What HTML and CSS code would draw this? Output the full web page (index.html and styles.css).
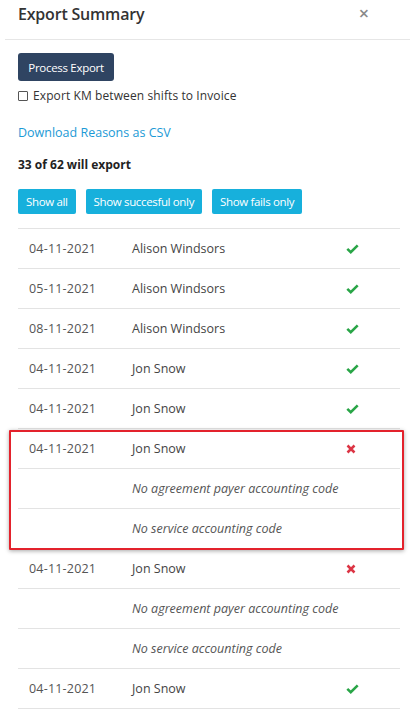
FILE: index.html
```html
<!DOCTYPE html>
<html>
<head>
<meta charset="utf-8">
<link rel="stylesheet" href="styles.css">
</head>
<body>
<div class="modal">
  <div class="header">
    <h1 class="title">Export Summary</h1>
    <span class="close">&times;</span>
  </div>
  <div class="content">
    <button class="btn-primary">Process Export</button>
    <label class="check-row"><input type="checkbox" class="check"> Export KM between shifts to Invoice</label>
    <a class="link">Download Reasons as CSV</a>
    <div class="count">33 of 62 will export</div>
    <div class="filters">
      <button class="btn-info">Show all</button>
      <button class="btn-info">Show succesful only</button>
      <button class="btn-info">Show fails only</button>
    </div>
    <div class="table">
      <div class="row"><span class="date">04-11-2021</span><span class="name">Alison Windsors</span><span class="status"><svg class="ok" viewBox="0 0 12 9"><path d="M1.2 4.4 L4.4 7.4 L10.8 1.2" /></svg></span></div>
      <div class="row"><span class="date">05-11-2021</span><span class="name">Alison Windsors</span><span class="status"><svg class="ok" viewBox="0 0 12 9"><path d="M1.2 4.4 L4.4 7.4 L10.8 1.2" /></svg></span></div>
      <div class="row"><span class="date">08-11-2021</span><span class="name">Alison Windsors</span><span class="status"><svg class="ok" viewBox="0 0 12 9"><path d="M1.2 4.4 L4.4 7.4 L10.8 1.2" /></svg></span></div>
      <div class="row"><span class="date">04-11-2021</span><span class="name">Jon Snow</span><span class="status"><svg class="ok" viewBox="0 0 12 9"><path d="M1.2 4.4 L4.4 7.4 L10.8 1.2" /></svg></span></div>
      <div class="row"><span class="date">04-11-2021</span><span class="name">Jon Snow</span><span class="status"><svg class="ok" viewBox="0 0 12 9"><path d="M1.2 4.4 L4.4 7.4 L10.8 1.2" /></svg></span></div>
      <div class="group highlighted">
        <div class="row"><span class="date">04-11-2021</span><span class="name">Jon Snow</span><span class="status"><svg class="fail" viewBox="0 0 10 10"><path d="M1.5 1.5 L8.5 8.5 M8.5 1.5 L1.5 8.5" /></svg></span></div>
        <div class="row"><span class="date"></span><span class="reason">No agreement payer accounting code</span></div>
        <div class="row"><span class="date"></span><span class="reason">No service accounting code</span></div>
        <div class="highlight-box"></div>
      </div>
      <div class="group">
        <div class="row"><span class="date">04-11-2021</span><span class="name">Jon Snow</span><span class="status"><svg class="fail" viewBox="0 0 10 10"><path d="M1.5 1.5 L8.5 8.5 M8.5 1.5 L1.5 8.5" /></svg></span></div>
        <div class="row"><span class="date"></span><span class="reason">No agreement payer accounting code</span></div>
        <div class="row"><span class="date"></span><span class="reason">No service accounting code</span></div>
      </div>
      <div class="row"><span class="date">04-11-2021</span><span class="name">Jon Snow</span><span class="status"><svg class="ok" viewBox="0 0 12 9"><path d="M1.2 4.4 L4.4 7.4 L10.8 1.2" /></svg></span></div>
    </div>
  </div>
</div>
</body>
</html>
```
FILE: styles.css
```css
* { box-sizing: border-box; }
html, body { margin: 0; padding: 0; background: #fff; }
body {
  font-family: "Open Sans", "Noto Sans", sans-serif;
  color: #333;
  font-size: 12px;
  overflow: hidden;
}
.modal { width: 415px; }
.header {
  margin: 0 5px;
  height: 40px;
  padding: 0 41px 0 13px;
  border-bottom: 1px solid #e6e6e6;
  display: flex;
  justify-content: space-between;
  align-items: flex-start;
}
.title {
  margin: 0;
  font-size: 16px;
  font-weight: 600;
  line-height: 28px;
  color: #333;
  letter-spacing: -0.2px;
}
.close {
  font-size: 18px;
  line-height: 26px;
  color: #8a8a8a;
  font-weight: 600;
}
.content {
  padding: 13px 15px 0 18px;
  display: flex;
  flex-direction: column;
  align-items: flex-start;
}
.btn-primary {
  height: 28px;
  width: 96px;
  padding: 0;
  border: none;
  border-radius: 3px;
  background: #2f4462;
  color: #fff;
  font-family: inherit;
  font-size: 11.5px;
  letter-spacing: -0.3px;
}
.check-row {
  display: flex;
  align-items: center;
  margin-top: 7px;
  font-size: 12px;
  color: #333;
  line-height: 16px;
  gap: 5px;
  letter-spacing: 0.1px;
}
.check {
  appearance: none;
  -webkit-appearance: none;
  margin: 0;
  width: 10px;
  height: 10px;
  border: 1px solid #555;
  border-radius: 1px;
  background: #fff;
}
.link {
  margin-top: 21px;
  color: #1c9ad6;
  font-size: 12.5px;
  line-height: 16px;
}
.count {
  margin-top: 16px;
  font-weight: 700;
  font-size: 12px;
  line-height: 16px;
  color: #222;
}
.filters {
  margin-top: 16px;
  display: flex;
  gap: 10px;
}
.btn-info {
  height: 25px;
  padding: 0 8px;
  border: none;
  border-radius: 2px;
  background: #17b0dc;
  color: #fff;
  font-family: inherit;
  font-size: 11.5px;
  letter-spacing: -0.35px;
}
.table {
  margin-top: 14px;
  width: 100%;
  border-top: 1px solid #e3e3e3;
}
.group { position: relative; }
.row {
  display: flex;
  align-items: center;
  height: 40px;
  border-bottom: 1px solid #e3e3e3;
  font-size: 12.5px;
  color: #444;
}
.date {
  width: 114px;
  padding-left: 11px;
  color: #555;
  letter-spacing: 0.2px;
}
.name {
  flex: 1;
  color: #444;
}
.reason {
  flex: 1;
  font-style: italic;
  color: #555;
}
.status {
  width: 54px;
  display: flex;
  align-items: center;
}
.ok { width: 13px; height: 10px; fill: none; stroke: #29a547; stroke-width: 2.4; }
.fail { width: 10px; height: 10px; fill: none; stroke: #dc3545; stroke-width: 2.5; }
.highlight-box {
  position: absolute;
  left: -9px;
  right: -4px;
  top: 1px;
  bottom: -1px;
  border: 2px solid #e3222c;
  border-radius: 1px;
  box-shadow: 0 1px 4px rgba(0, 0, 0, 0.35);
  pointer-events: none;
}
```
